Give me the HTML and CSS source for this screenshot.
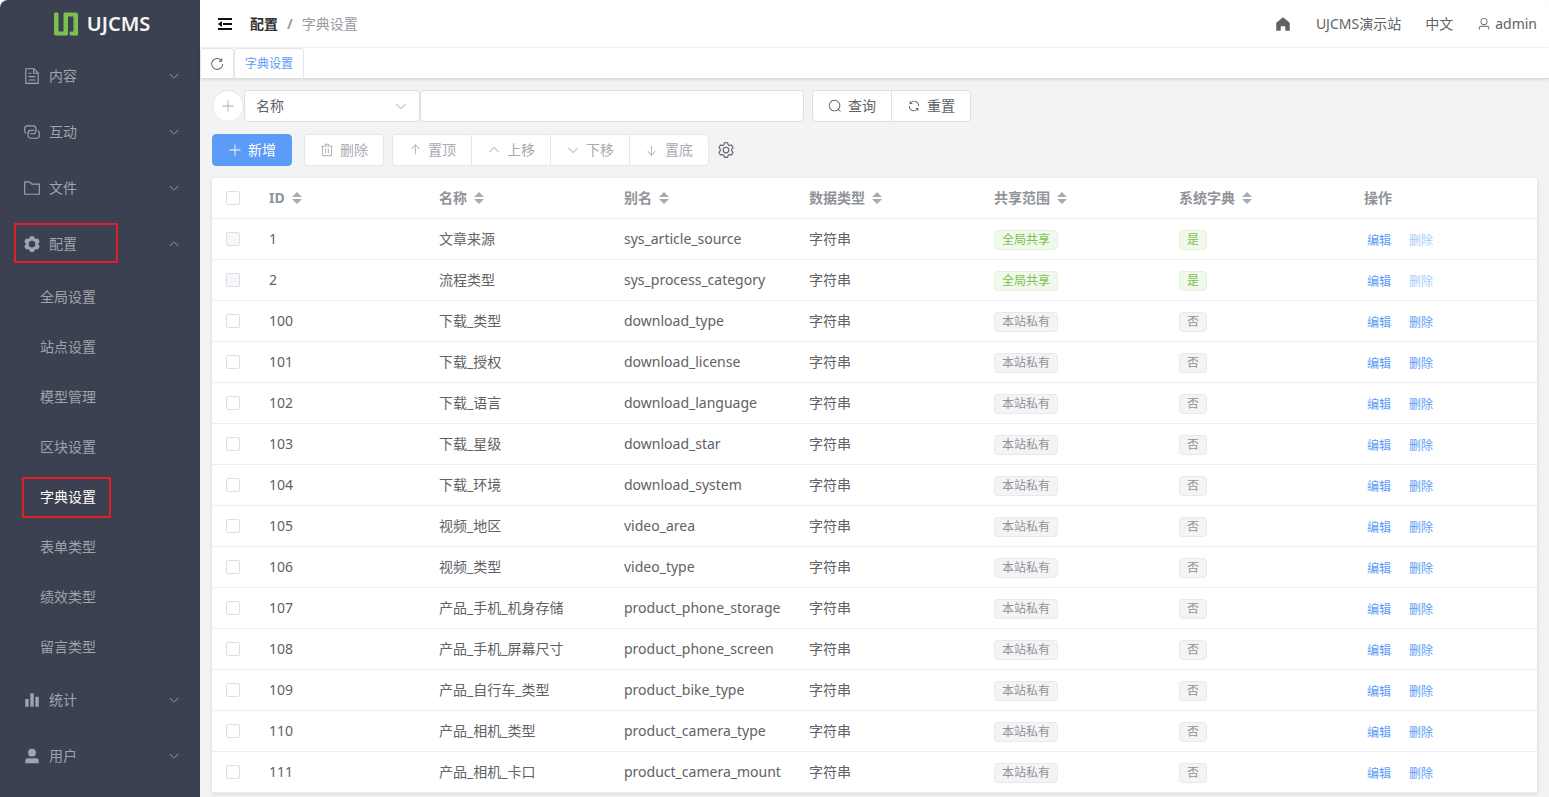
FILE: index.html
```html
<!DOCTYPE html>
<html lang="zh-CN">
<head>
<meta charset="utf-8">
<title>字典设置 - UJCMS</title>
<link rel="stylesheet" href="styles.css">
</head>
<body>
<svg class="sprite" aria-hidden="true">
  <symbol id="i-doc" viewBox="0 0 1024 1024"><path d="M832 384H576V128H192v768h640zm-26.496-64L640 154.496V320zM160 64h480l256 256v608a32 32 0 0 1-32 32H160a32 32 0 0 1-32-32V96a32 32 0 0 1 32-32m160 448h384v64H320zm0-192h160v64H320zm0 384h384v64H320z"/></symbol>
  <symbol id="i-link" viewBox="0 0 1024 1024"><path d="M640 384v64H448a128 128 0 0 0-128 128v128a128 128 0 0 0 128 128h320a128 128 0 0 0 128-128V576a128 128 0 0 0-64-110.848V394.88c74.56 26.368 128 97.472 128 181.056v128a192 192 0 0 1-192 192H448a192 192 0 0 1-192-192V576a192 192 0 0 1 192-192z"/><path d="M384 640v-64h192a128 128 0 0 0 128-128V320a128 128 0 0 0-128-128H256a128 128 0 0 0-128 128v128a128 128 0 0 0 64 110.848v70.272A192.064 192.064 0 0 1 64 448V320a192 192 0 0 1 192-192h320a192 192 0 0 1 192 192v128a192 192 0 0 1-192 192z"/></symbol>
  <symbol id="i-folder" viewBox="0 0 1024 1024"><path d="M128 192v640h768V320H485.76L357.504 192zm-32-64h287.872l128.384 128H928a32 32 0 0 1 32 32v576a32 32 0 0 1-32 32H96a32 32 0 0 1-32-32V160a32 32 0 0 1 32-32"/></symbol>
  <symbol id="i-gear-solid" viewBox="0 0 1024 1024"><path fill-rule="evenodd" d="M600.704 64a32 32 0 0 1 30.464 22.208l35.2 109.376c14.784 7.232 28.928 15.36 42.432 24.512l112.384-24.192a32 32 0 0 1 34.432 15.36L944.32 364.8a32 32 0 0 1-4.032 37.504l-77.12 85.12a357.12 357.12 0 0 1 0 49.024l77.12 85.248a32 32 0 0 1 4.032 37.504l-88.704 153.6a32 32 0 0 1-34.432 15.296L708.8 803.904c-13.44 9.088-27.648 17.28-42.368 24.512l-35.264 109.376A32 32 0 0 1 600.704 960H423.296a32 32 0 0 1-30.464-22.208L357.696 828.48a351.616 351.616 0 0 1-42.56-24.64l-112.32 24.256a32 32 0 0 1-34.432-15.36L79.68 659.2a32 32 0 0 1 4.032-37.504l77.12-85.248a357.12 357.12 0 0 1 0-48.896l-77.12-85.248A32 32 0 0 1 79.68 364.8l88.704-153.6a32 32 0 0 1 34.432-15.296l112.32 24.256c13.568-9.152 27.776-17.408 42.56-24.64l35.2-109.312A32 32 0 0 1 423.232 64zM512 320a192 192 0 1 0 0 384 192 192 0 0 0 0-384"/></symbol>
  <symbol id="i-gear" viewBox="0 0 1024 1024"><path d="M600.704 64a32 32 0 0 1 30.464 22.208l35.2 109.376c14.784 7.232 28.928 15.36 42.432 24.512l112.384-24.192a32 32 0 0 1 34.432 15.36L944.32 364.8a32 32 0 0 1-4.032 37.504l-77.12 85.12a357.12 357.12 0 0 1 0 49.024l77.12 85.248a32 32 0 0 1 4.032 37.504l-88.704 153.6a32 32 0 0 1-34.432 15.296L708.8 803.904c-13.44 9.088-27.648 17.28-42.368 24.512l-35.264 109.376A32 32 0 0 1 600.704 960H423.296a32 32 0 0 1-30.464-22.208L357.696 828.48a351.616 351.616 0 0 1-42.56-24.64l-112.32 24.256a32 32 0 0 1-34.432-15.36L79.68 659.2a32 32 0 0 1 4.032-37.504l77.12-85.248a357.12 357.12 0 0 1 0-48.896l-77.12-85.248A32 32 0 0 1 79.68 364.8l88.704-153.6a32 32 0 0 1 34.432-15.296l112.32 24.256c13.568-9.152 27.776-17.408 42.56-24.64l35.2-109.312A32 32 0 0 1 423.232 64H600.64zm-23.424 64H446.72l-36.352 113.088-24.512 11.968a294.113 294.113 0 0 0-34.816 20.096l-22.656 15.36-116.224-25.088-65.28 113.152 79.68 88.192-1.92 27.136a293.12 293.12 0 0 0 0 40.192l1.92 27.136-79.808 88.192 65.344 113.152 116.224-25.024 22.656 15.296a294.113 294.113 0 0 0 34.816 20.096l24.512 11.968L446.72 896h130.688l36.48-113.152 24.448-11.904a288.282 288.282 0 0 0 34.752-20.096l22.592-15.296 116.288 25.024 65.28-113.152-79.744-88.192 1.92-27.136a293.12 293.12 0 0 0 0-40.256l-1.92-27.136 79.808-88.128-65.344-113.152-116.288 24.96-22.592-15.232a287.616 287.616 0 0 0-34.752-20.096l-24.448-11.904L577.344 128zM512 320a192 192 0 1 1 0 384 192 192 0 0 1 0-384m0 64a128 128 0 1 0 0 256 128 128 0 0 0 0-256"/></symbol>
  <symbol id="i-bars" viewBox="0 0 1024 1024"><path d="M416 896V128h192v768zm-288 0V448h192v448zm576 0V320h192v576z"/></symbol>
  <symbol id="i-person" viewBox="0 0 1024 1024"><path d="M288 320a224 224 0 1 0 448 0 224 224 0 1 0-448 0m544 608H160a32 32 0 0 1-32-32v-96a160 160 0 0 1 160-160h448a160 160 0 0 1 160 160v96a32 32 0 0 1-32 32z"/></symbol>
  <symbol id="i-down" viewBox="0 0 1024 1024"><path d="M831.872 340.864 512 652.672 192.128 340.864a30.592 30.592 0 0 0-42.752 0 29.12 29.12 0 0 0 0 41.6L489.664 714.24a32 32 0 0 0 44.672 0l340.288-331.712a29.12 29.12 0 0 0 0-41.728 30.592 30.592 0 0 0-42.752 0z"/></symbol>
  <symbol id="i-home" viewBox="0 0 1024 1024"><path d="M512 128 128 447.936V896h255.936V640H640v256h255.936V447.936z"/></symbol>
  <symbol id="i-user" viewBox="0 0 1024 1024"><path d="M512 512a192 192 0 1 0 0-384 192 192 0 0 0 0 384m0 64a256 256 0 1 1 0-512 256 256 0 0 1 0 512m320 320v-96a96 96 0 0 0-96-96H288a96 96 0 0 0-96 96v96a32 32 0 1 1-64 0v-96a160 160 0 0 1 160-160h448a160 160 0 0 1 160 160v96a32 32 0 1 1-64 0"/></symbol>
  <symbol id="i-reload" viewBox="0 0 1024 1024"><path d="M784.512 230.272v-50.56a32 32 0 1 1 64 0v149.056a32 32 0 0 1-32 32H667.52a32 32 0 1 1 0-64h92.992A320 320 0 1 0 524.8 833.152a320 320 0 0 0 320-320h64a384 384 0 0 1-384 384 384 384 0 0 1-384-384 384 384 0 0 1 643.712-282.88z"/></symbol>
  <symbol id="i-plus" viewBox="0 0 1024 1024"><path d="M480 480V128a32 32 0 0 1 64 0v352h352a32 32 0 1 1 0 64H544v352a32 32 0 1 1-64 0V544H128a32 32 0 0 1 0-64z"/></symbol>
  <symbol id="i-search" viewBox="0 0 1024 1024"><path d="m795.904 750.72 124.992 124.928a32 32 0 0 1-45.248 45.248L750.656 795.904a416 416 0 1 1 45.248-45.248zM480 832a352 352 0 1 0 0-704 352 352 0 0 0 0 704"/></symbol>
  <symbol id="i-refresh" viewBox="0 0 1024 1024"><path d="M771.776 794.88A384 384 0 0 1 128 512h64a320 320 0 0 0 555.712 216.448H654.72a32 32 0 1 1 0-64h149.056a32 32 0 0 1 32 32v148.928a32 32 0 1 1-64 0v-50.56zM276.288 295.616h92.992a32 32 0 0 1 0 64H220.16a32 32 0 0 1-32-32V178.56a32 32 0 0 1 64 0v50.56A384 384 0 0 1 896.128 512h-64a320 320 0 0 0-555.776-216.384z"/></symbol>
  <symbol id="i-trash" viewBox="0 0 1024 1024"><path d="M160 256H96a32 32 0 0 1 0-64h256V95.936a32 32 0 0 1 32-32h256a32 32 0 0 1 32 32V192h256a32 32 0 1 1 0 64h-64v672a32 32 0 0 1-32 32H192a32 32 0 0 1-32-32zm448-64v-64H416v64zM224 896h576V256H224zm192-128a32 32 0 0 1-32-32V416a32 32 0 0 1 64 0v320a32 32 0 0 1-32 32m192 0a32 32 0 0 1-32-32V416a32 32 0 0 1 64 0v320a32 32 0 0 1-32 32"/></symbol>
  <symbol id="i-top" viewBox="0 0 1024 1024"><path d="M572.235 205.282v600.365a30.118 30.118 0 1 1-60.235 0V205.282L292.382 438.633a28.913 28.913 0 0 1-42.646 0 33.43 33.43 0 0 1 0-45.236l271.058-288.045a28.913 28.913 0 0 1 42.647 0L834.5 393.397a33.43 33.43 0 0 1 0 45.176 28.913 28.913 0 0 1-42.647 0l-219.618-233.23z"/></symbol>
  <symbol id="i-sort" viewBox="0 0 10 12"><path d="M5 0l5 5H0zM5 12l5-5H0z"/></symbol>
</svg>
<div class="app">
  <aside class="sidebar">
    <a class="brand" href="#">
      <svg class="brand-logo" viewBox="0 0 24 24" aria-hidden="true"><path d="M0 1.500Q0 .500 1 .500h2.500q1 0 1 1V19.500H9.500V2q0-1.500 1.500-1.500H22q2 0 2 2V22q0 1.500-1.500 1.500H17q-1.500 0-1.500-2t1.500-2h2.500V4.500H14V22q0 1.500-1.500 1.500H2q-2 0-2-2z" fill="#7ec050"/></svg>
      <span>UJCMS</span>
    </a>
    <nav class="menu" id="menu"></nav>
  </aside>
  <div class="main">
    <header class="topbar">
      <button class="icon-btn fold" type="button" aria-label="折叠菜单"><svg viewBox="0 0 14 12" class="fold-icon"><path d="M0 0h14v2H0zM5 5h9v2H5zM0 10h14v2H0zM0 6l4-3v6z"/></svg></button>
      <nav class="crumbs"><a class="crumb-root" href="#">配置</a><span class="crumb-sep">/</span><span>字典设置</span></nav>
      <div class="top-links">
        <a href="#" aria-label="首页"><svg class="ico ico-xl"><use href="#i-home"/></svg></a>
        <a href="#">UJCMS演示站</a>
        <a href="#">中文</a>
        <a class="account" href="#"><svg class="ico"><use href="#i-user"/></svg>admin</a>
      </div>
    </header>
    <div class="tabs">
      <button class="tab tab-reload" type="button" aria-label="刷新"><svg class="ico ico-lg"><use href="#i-reload"/></svg></button>
      <a class="tab" href="#">字典设置</a>
    </div>
    <main class="content">
      <form class="search">
        <button class="round" type="button" aria-label="添加条件"><svg class="ico"><use href="#i-plus"/></svg></button>
        <div class="select-wrap">
          <select class="field" aria-label="查询字段"><option>名称</option></select>
          <svg class="ico select-arrow"><use href="#i-down"/></svg>
        </div>
        <input class="field keyword" type="text" aria-label="查询内容">
        <div class="group">
          <button class="btn" type="button"><svg class="ico"><use href="#i-search"/></svg>查询</button>
          <button class="btn" type="button"><svg class="ico"><use href="#i-refresh"/></svg>重置</button>
        </div>
      </form>
      <div class="actions">
        <button class="btn primary" type="button"><svg class="ico"><use href="#i-plus"/></svg>新增</button>
        <button class="btn" type="button" disabled><svg class="ico"><use href="#i-trash"/></svg>删除</button>
        <div class="group">
          <button class="btn" type="button" disabled><svg class="ico"><use href="#i-top"/></svg>置顶</button>
          <button class="btn" type="button" disabled><svg class="ico flip"><use href="#i-down"/></svg>上移</button>
          <button class="btn" type="button" disabled><svg class="ico"><use href="#i-down"/></svg>下移</button>
          <button class="btn" type="button" disabled><svg class="ico flip"><use href="#i-top"/></svg>置底</button>
        </div>
        <button class="icon-btn" type="button" aria-label="列设置"><svg class="ico ico-xl"><use href="#i-gear"/></svg></button>
      </div>
      <table class="grid">
        <colgroup><col class="c-check"><col class="c-id"><col><col><col><col><col><col></colgroup>
        <thead><tr id="head"></tr></thead>
        <tbody id="rows"></tbody>
      </table>
    </main>
  </div>
</div>
<script src="app.js"></script>
</body>
</html>
```
FILE: styles.css
```css
* { box-sizing: border-box; }
body {
  margin: 0;
  background: #fff;
  color: #606266;
  font: 14px/20px "Noto Sans", "Noto Sans CJK SC", sans-serif;
}
a { color: inherit; text-decoration: none; }
button, input, select { font: inherit; color: inherit; margin: 0; }
.sprite { display: none; }
.ico { width: 14px; height: 14px; fill: currentColor; flex: none; }
.ico-lg { width: 16px; height: 16px; }
.ico-xl { width: 18px; height: 18px; }
.flip { transform: rotate(180deg); }
.icon-btn { display: flex; padding: 0; border: 0; background: none; }

.app { display: flex; height: 100vh; overflow: hidden; border-radius: 8px 8px 0 0; background: #f2f3f5; }
.sidebar { flex: 0 0 200px; background: #3b4150; color: #a0a4ac; }
.brand {
  display: flex; align-items: center; justify-content: center; gap: 9px;
  height: 48px; padding-left: 4px;
  color: #f5f5f5; font-size: 20px; font-weight: 600;
}
.brand-logo { width: 24px; height: 24px; }
.menu-item { position: relative; display: flex; align-items: center; gap: 8px; height: 56px; padding: 0 20px 0 23px; }
.menu-item .arrow { width: 12px; height: 12px; margin-left: auto; }
.sub-item { position: relative; display: flex; align-items: center; height: 50px; padding-left: 40px; }
.sub-item.active { color: #fff; }
.marked::after { content: ""; position: absolute; border: 2px solid #e01f26; }
.menu-item.marked::after { inset: 7px 82px 9px 14px; }
.sub-item.marked::after { inset: 5px 89px 4px 22px; }

.main { flex: 1; min-width: 0; display: flex; flex-direction: column; }
.topbar { display: flex; align-items: center; flex: none; height: 48px; padding: 0 12px 0 18px; background: #fff; border-bottom: 1px solid #f5f5f6; }
.fold-icon { width: 14px; height: 12px; fill: #111; }
.crumbs { display: flex; margin-left: 18px; color: #999ca3; }
.crumb-root { color: #303133; font-weight: 700; }
.crumb-sep { margin: 0 9px; font-weight: 700; }
.top-links { display: flex; align-items: center; gap: 24px; margin-left: auto; }
.top-links a { display: flex; align-items: center; gap: 4px; }

.tabs { position: relative; display: flex; flex: none; height: 31px; background: #fff; border-bottom: 1px solid #dcdde0; box-shadow: 0 1px 3px rgba(0, 0, 0, .1); }
.tab {
  display: flex; align-items: center; padding: 0 10px;
  border: 1px solid #e4e7ed; border-bottom: 0; border-radius: 3px 3px 0 0;
  background: #fff; color: #5a9cf8; font-size: 12px;
}
.tab-reload { padding: 0 8px; color: #606266; }

.content { padding: 11px 12px; }
.search, .actions { display: flex; align-items: center; }
.round { display: flex; align-items: center; justify-content: center; width: 32px; height: 32px; padding: 0; border: 1px solid #e4e7ed; border-radius: 50%; background: #fff; color: #a8abb2; }
.field { height: 32px; border: 1px solid #dcdfe6; border-radius: 4px; background: #fff; }
.select-wrap { position: relative; }
.select-wrap .field { appearance: none; width: 176px; padding: 0 11px; }
.select-arrow { position: absolute; right: 12px; top: 9px; color: #a8abb2; pointer-events: none; }
.keyword { width: 384px; padding: 0 11px; }
.group { display: flex; }
.search .group { margin-left: 8px; }
.btn {
  display: flex; align-items: center; justify-content: center; gap: 6px;
  width: 80px; height: 32px; padding: 0;
  border: 1px solid #dcdfe6; border-radius: 4px; background: #fff;
}
.btn:disabled { border-color: #e4e7ed; color: #a8abb2; }
.btn.primary { border-color: #5a9cf8; background: #5a9cf8; color: #fff; }
.group .btn + .btn { margin-left: -1px; border-top-left-radius: 0; border-bottom-left-radius: 0; }
.group .btn:not(:last-child) { border-top-right-radius: 0; border-bottom-right-radius: 0; }
.actions { margin: 12px 0; }
.actions > .btn { margin-right: 12px; }
.actions > .btn:disabled { margin-right: 8px; }
.actions .icon-btn { margin-left: 8px; }

.grid { width: 100%; table-layout: fixed; border-collapse: separate; border-spacing: 0; background: #fff; box-shadow: 0 1px 4px rgba(0, 0, 0, .12); }
.c-check { width: 45px; }
.c-id { width: 170px; }
.grid th, .grid td { height: 41px; padding: 0 12px; border-bottom: 1px solid #ebeef5; text-align: left; white-space: nowrap; }
.grid th { color: #909399; font-weight: 700; }
.grid tr > :first-child { padding: 0 14px; }
.th { display: flex; align-items: center; gap: 7px; }
.sort { width: 10px; height: 12px; fill: #a8abb2; }
.check { display: block; appearance: none; width: 14px; height: 14px; border: 1px solid #dcdfe6; border-radius: 2px; background: #fff; }
.check:disabled { background: #f5f7fa; }
.tag { display: inline-flex; align-items: center; height: 20px; padding: 0 7px; border: 1px solid #e9e9eb; border-radius: 4px; background: #f4f4f5; color: #909399; font-size: 12px; vertical-align: middle; }
.tag.on { border-color: #e1f3d8; background: #f0f9eb; color: #7ec050; }
.ops { display: flex; gap: 18px; padding: 4px 3px 0; }
.link { padding: 0; border: 0; background: none; color: #5a9cf8; font-size: 12px; }
.link:disabled { color: #a6cbfb; }
```
FILE: app.js
```js
const icon = (name, cls = "ico") => `<svg class="${cls}"><use href="#i-${name}"/></svg>`;

const settings = ["全局设置", "站点设置", "模型管理", "区块设置", "字典设置", "表单类型", "绩效类型", "留言类型"];
const menu = [
  ["doc", "内容"], ["link", "互动"], ["folder", "文件"],
  ["gear-solid", "配置", settings], ["bars", "统计"], ["person", "用户"],
];
document.getElementById("menu").innerHTML = menu.map(([ico, label, subs]) =>
  `<a class="menu-item${subs ? " marked" : ""}" href="#">${icon(ico, "ico ico-xl")}<span>${label}</span>${icon("down", subs ? "ico arrow flip" : "ico arrow")}</a>` +
  (subs || []).map(s => `<a class="sub-item${s === "字典设置" ? " active marked" : ""}" href="#">${s}</a>`).join("")
).join("");

document.getElementById("head").innerHTML =
  `<th><input class="check" type="checkbox" aria-label="全选"></th>` +
  ["ID", "名称", "别名", "数据类型", "共享范围", "系统字典"].map(t => `<th><div class="th">${t}${icon("sort", "sort")}</div></th>`).join("") +
  `<th>操作</th>`;

const rows = [
  [1, "文章来源", "sys_article_source", true],
  [2, "流程类型", "sys_process_category", true],
  [100, "下载_类型", "download_type"],
  [101, "下载_授权", "download_license"],
  [102, "下载_语言", "download_language"],
  [103, "下载_星级", "download_star"],
  [104, "下载_环境", "download_system"],
  [105, "视频_地区", "video_area"],
  [106, "视频_类型", "video_type"],
  [107, "产品_手机_机身存储", "product_phone_storage"],
  [108, "产品_手机_屏幕尺寸", "product_phone_screen"],
  [109, "产品_自行车_类型", "product_bike_type"],
  [110, "产品_相机_类型", "product_camera_type"],
  [111, "产品_相机_卡口", "product_camera_mount"],
];
document.getElementById("rows").innerHTML = rows.map(([id, name, alias, sys]) => {
  const off = sys ? " disabled" : "";
  const on = sys ? " on" : "";
  return `<tr><td><input class="check" type="checkbox" aria-label="选择 ${name}"${off}></td>
    <td>${id}</td><td>${name}</td><td>${alias}</td><td>字符串</td>
    <td><span class="tag${on}">${sys ? "全局共享" : "本站私有"}</span></td>
    <td><span class="tag${on}">${sys ? "是" : "否"}</span></td>
    <td><div class="ops"><button class="link" type="button">编辑</button><button class="link" type="button"${off}>删除</button></div></td></tr>`;
}).join("");
```
